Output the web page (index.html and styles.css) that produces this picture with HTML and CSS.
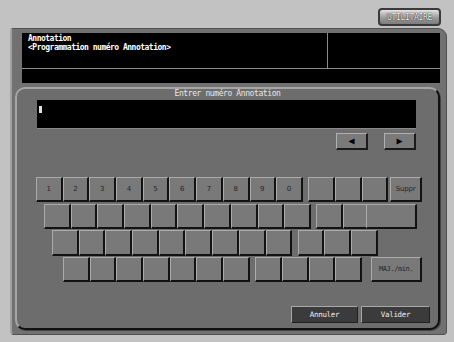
FILE: index.html
```html
<!DOCTYPE html>
<html>
	<head>
		<meta charset="UTF-8">
		<title>Annotation</title>
		<link rel="stylesheet" href="styles.css">
	</head>
	<body>
		<div class="topbar">
			<button class="util">UTILITAIRE</button>
		</div>
		<div class="panel">
			<div class="header">
				<div class="head-top">
					<div class="head-text">
						<p>Annotation</p>
						<p>&lt;Programmation numéro Annotation&gt;</p>
					</div>
					<div class="head-side"></div>
				</div>
			</div>
			<div class="dialog">
				<div class="title">Entrer numéro Annotation</div>
				<div class="field"><span class="cursor"></span></div>
				<div class="arrows">
					<button class="arrow">&#9664;</button>
					<button class="arrow">&#9654;</button>
				</div>
				<div class="keyboard">
					<div class="row r1">
						<div class="group">
							<div class="key">1</div><div class="key">2</div><div class="key">3</div><div class="key">4</div><div class="key">5</div>
							<div class="key">6</div><div class="key">7</div><div class="key">8</div><div class="key">9</div><div class="key">0</div>
						</div>
						<div class="group">
							<div class="key"></div><div class="key"></div><div class="key"></div>
							<div class="key wide1">Suppr</div>
						</div>
					</div>
					<div class="row r2">
						<div class="group">
							<div class="key"></div><div class="key"></div><div class="key"></div><div class="key"></div><div class="key"></div>
							<div class="key"></div><div class="key"></div><div class="key"></div><div class="key"></div><div class="key"></div>
						</div>
						<div class="group">
							<div class="key"></div><div class="key"></div>
							<div class="key wide2"></div>
						</div>
					</div>
					<div class="row r3">
						<div class="group">
							<div class="key"></div><div class="key"></div><div class="key"></div><div class="key"></div><div class="key"></div>
							<div class="key"></div><div class="key"></div><div class="key"></div><div class="key"></div>
						</div>
						<div class="group">
							<div class="key"></div><div class="key"></div><div class="key"></div>
						</div>
					</div>
					<div class="row r4">
						<div class="group">
							<div class="key"></div><div class="key"></div><div class="key"></div><div class="key"></div><div class="key"></div>
							<div class="key"></div><div class="key"></div>
						</div>
						<div class="group">
							<div class="key"></div><div class="key"></div><div class="key"></div><div class="key"></div>
						</div>
						<div class="key wide2 maj">MAJ./min.</div>
					</div>
				</div>
				<div class="actions">
					<button class="act">Annuler</button>
					<button class="act">Valider</button>
				</div>
			</div>
		</div>
	</body>
</html>
```

FILE: styles.css
```css
*{
	margin: 0;
	padding: 0;
	box-sizing: border-box;
}
body{
	width: 454px;
	height: 342px;
	background: #c2c2c2;
	font-family: "DejaVu Sans Mono", "Liberation Mono", monospace;
	overflow: hidden;
}
button{
	font-family: inherit;
	cursor: pointer;
}
.topbar{
	height: 28px;
	display: flex;
	justify-content: flex-end;
	align-items: flex-start;
	padding: 8px 13px 0 0;
}
.util{
	width: 63px;
	height: 18px;
	border: 2px solid #3a3a3a;
	border-radius: 4px;
	background: linear-gradient(#e4e4e4, #9a9a9a 55%, #7c7c7c);
	color: #f2f2f2;
	font-size: 8px;
	letter-spacing: -0.3px;
	text-shadow: 0 0 1px #222, 0 0 1px #222;
}
.panel{
	margin: 0 7px 0 10px;
	height: 307px;
	background: #717171;
	border: 1px solid #505050;
	border-left: 2px solid #a0a0a0;
	border-radius: 3px 9px 4px 4px;
	padding: 4px 6px 0 3px;
}
.header{
	margin-left: 7px;
	height: 50px;
	background: #000;
}
.head-top{
	display: flex;
	height: 36px;
	border-bottom: 1px solid #8c8c8c;
}
.head-text{
	flex: 1;
	padding: 2px 0 0 6px;
	color: #fff;
	font-size: 8px;
	font-weight: bold;
	line-height: 8.5px;
	letter-spacing: -0.5px;
	border-right: 1px solid #8c8c8c;
}
.head-side{
	width: 112px;
}
.dialog{
	margin-top: 4px;
	height: 243px;
	background: #6d6d6d;
	border-radius: 10px;
	border-top: 2px solid #a6a6a6;
	border-left: 2px solid #a6a6a6;
	border-right: 2px solid #111;
	border-bottom: 2px solid #111;
	box-shadow: 1px 1px 0 #444;
}
.title{
	height: 11px;
	text-align: center;
	color: #e8e8e8;
	font-size: 8px;
	line-height: 10px;
	letter-spacing: -0.4px;
}
.field{
	margin: 0 22px 0 20px;
	height: 29px;
	background: #000;
	border-bottom: 1px solid #8a8a8a;
	padding: 6px 0 0 2px;
}
.cursor{
	display: block;
	width: 3px;
	height: 7px;
	background: #e0e0e0;
}
.arrows{
	display: flex;
	justify-content: flex-end;
	gap: 16px;
	margin: 4px 22px 0 0;
}
.arrow{
	width: 32px;
	height: 17px;
	background: #7a7a7a;
	border-top: 1px solid #b0b0b0;
	border-left: 1px solid #b0b0b0;
	border-right: 2px solid #1a1a1a;
	border-bottom: 2px solid #1a1a1a;
	color: #000;
	font-size: 10px;
	line-height: 12px;
}
.keyboard{
	margin-top: 27px;
	display: flex;
	flex-direction: column;
}
.row{
	display: flex;
	height: 26.7px;
}
.r1{ padding-left: 19px; }
.r2{ padding-left: 27px; }
.r3{ padding-left: 35px; }
.r4{ padding-left: 46px; }
.group{
	display: flex;
	margin-right: 5.5px;
}
.key{
	width: 26.7px;
	height: 25.2px;
	background: #797979;
	border-top: 1px solid #ababab;
	border-left: 1px solid #ababab;
	border-right: 2px solid #121212;
	border-bottom: 2px solid #121212;
	color: #262626;
	font-family: "DejaVu Sans", sans-serif;
	font-size: 7px;
	display: flex;
	align-items: center;
	justify-content: center;
}
.wide1{
	width: 31.5px;
	margin-left: 2px;
	letter-spacing: -0.2px;
}
.wide2{
	width: 51px;
}
.r2 .wide2{
	margin-left: -3.5px;
}
.maj{
	margin-left: 3.5px;
	font-family: "DejaVu Sans Mono", monospace;
	letter-spacing: -0.4px;
}
.actions{
	display: flex;
	justify-content: flex-end;
	gap: 3px;
	margin: 22px 8px 0 0;
}
.act{
	width: 67px;
	height: 17px;
	background: #3b3b3b;
	border: 1px solid #a8a8a8;
	border-right-color: #222;
	border-bottom-color: #222;
	color: #f0f0f0;
	font-size: 7.5px;
	letter-spacing: -0.3px;
}
.act + .act{
	width: 69px;
}
```
